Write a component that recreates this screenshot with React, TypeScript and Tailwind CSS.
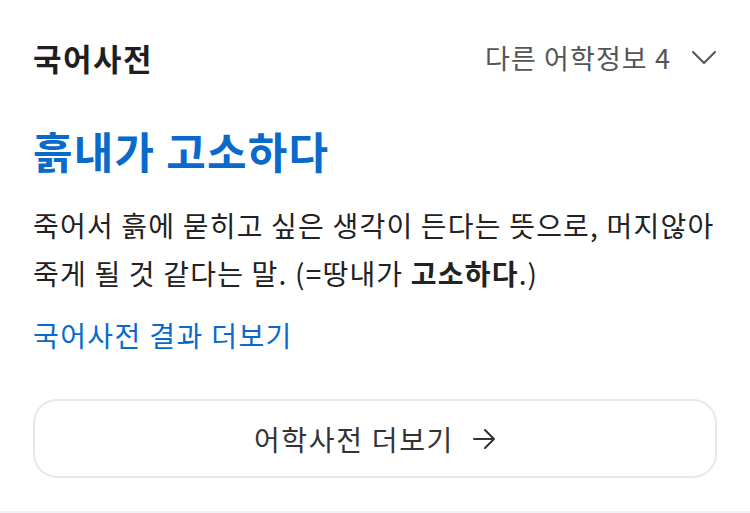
import React from 'react';

const font = { fontFamily: '"Noto Sans CJK KR", "Noto Sans", sans-serif' };

function ChevronDown() {
  return (
    <svg width="26" height="16" viewBox="0 0 26 16" fill="none" className="ml-[20px]">
      <path d="M2 2L13 13L24 2" stroke="#555" strokeWidth="2" strokeLinecap="round" strokeLinejoin="round" />
    </svg>
  );
}

function ArrowRight() {
  return (
    <svg width="24" height="22" viewBox="0 0 24 22" fill="none" className="ml-[18px]">
      <path d="M2 11H22M13 2L22 11L13 20" stroke="#333" strokeWidth="2" strokeLinecap="round" strokeLinejoin="round" />
    </svg>
  );
}

export default function App() {
  return (
    <div className="w-[750px] bg-white" style={font}>
      <div className="px-[33px] pt-[36px] pb-[33px]">
        {/* Header */}
        <div className="flex items-center justify-between h-[44px]">
          <h2 className="text-[31px] font-bold text-[#1e1e23] tracking-[1.5px]">국어사전</h2>
          <button className="flex items-center text-[27px] text-[#555] tracking-[1.1px]">
            다른 어학정보 4
            <ChevronDown />
          </button>
        </div>

        {/* Headword */}
        <div className="mt-[44px] text-[43px] leading-[52px] font-bold text-[#0a6acb] tracking-[1.2px]">
          흙내가 고소하다
        </div>

        {/* Definition */}
        <p className="mt-[25px] mr-[-16px] text-[28px] leading-[48px] text-[#222] tracking-[1.2px]">
          죽어서 흙에 묻히고 싶은 생각이 든다는 뜻으로, 머지않아 죽게 될 것 같다는 말. (=땅내가{' '}
          <strong className="font-bold">고소하다</strong>.)
        </p>

        {/* Link */}
        <a className="block mt-[18px] text-[28px] leading-[40px] text-[#0a6acb] tracking-[1.4px]">
          국어사전 결과 더보기
        </a>

        {/* Button */}
        <button className="mt-[44px] w-full h-[79px] flex items-center justify-center rounded-[24px] border-2 border-[#e7e8ec] text-[28px] text-[#333] tracking-[1.7px]">
          어학사전 더보기
          <ArrowRight />
        </button>
      </div>
      <div className="h-[20px] bg-[#f0f1f4]" />
    </div>
  );
}
